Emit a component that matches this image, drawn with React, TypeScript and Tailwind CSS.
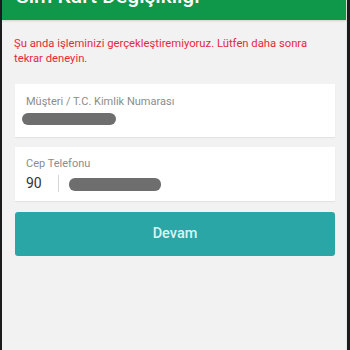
import React from "react";

export default function App() {
  return (
    <div className="w-[350px] h-[350px] flex bg-[#1c1c1c] overflow-hidden" style={{ fontFamily: "Roboto, 'Noto Sans', sans-serif" }}>
      <div className="ml-[2px] w-[345px] h-full flex flex-col bg-[#f2f2f2] border-r border-[#e6e6e6]">
        <div className="h-[20px] shrink-0 bg-[#10984a] overflow-hidden flex items-end pl-[14px] shadow-[0_1px_2px_rgba(0,0,0,0.15)]">
          <div className="text-white text-[21px] leading-[21px] font-medium mb-[13px] whitespace-nowrap">Sim Kart Değişikliği</div>
        </div>
        <div className="pl-[12px] pr-[30px] pt-[16px] text-[#e8283a] text-[11.25px] leading-[15px]">
          Şu anda işleminizi gerçekleştiremiyoruz. Lütfen daha sonra tekrar deneyin.
        </div>
        <div className="mt-[18px] ml-[13px] w-[320px] h-[53px] shrink-0 bg-white shadow-[0_1px_1px_rgba(0,0,0,0.06)] pl-[11px] pt-[11px]">
          <div className="text-[#8c8c8c] text-[11px] leading-[13px]">Müşteri / T.C. Kimlik Numarası</div>
          <div className="mt-[5px] -ml-[4px] w-[94px] h-[12px] rounded-[6px] bg-[#6e6e6e] blur-[0.6px]" />
        </div>
        <div className="mt-[10px] ml-[13px] w-[320px] h-[54px] shrink-0 bg-white shadow-[0_1px_1px_rgba(0,0,0,0.06)] pl-[11px] pt-[10px]">
          <div className="text-[#8c8c8c] text-[11px] leading-[13px]">Cep Telefonu</div>
          <div className="mt-[4px] flex items-center">
            <span className="text-[#333] text-[14px] leading-[18px] w-[32px]">90</span>
            <span className="w-px h-[17px] bg-[#d6d6d6]" />
            <span className="ml-[10px] mt-[2px] w-[92px] h-[13px] rounded-[6px] bg-[#6e6e6e] blur-[0.6px]" />
          </div>
        </div>
        <div className="mt-[11px] ml-[13px] w-[320px] h-[44px] shrink-0 rounded-[3px] bg-[#2ba6a6] flex items-center justify-center">
          <span className="text-[#d6f6f4] text-[14.5px] font-medium">Devam</span>
        </div>
      </div>
    </div>
  );
}
